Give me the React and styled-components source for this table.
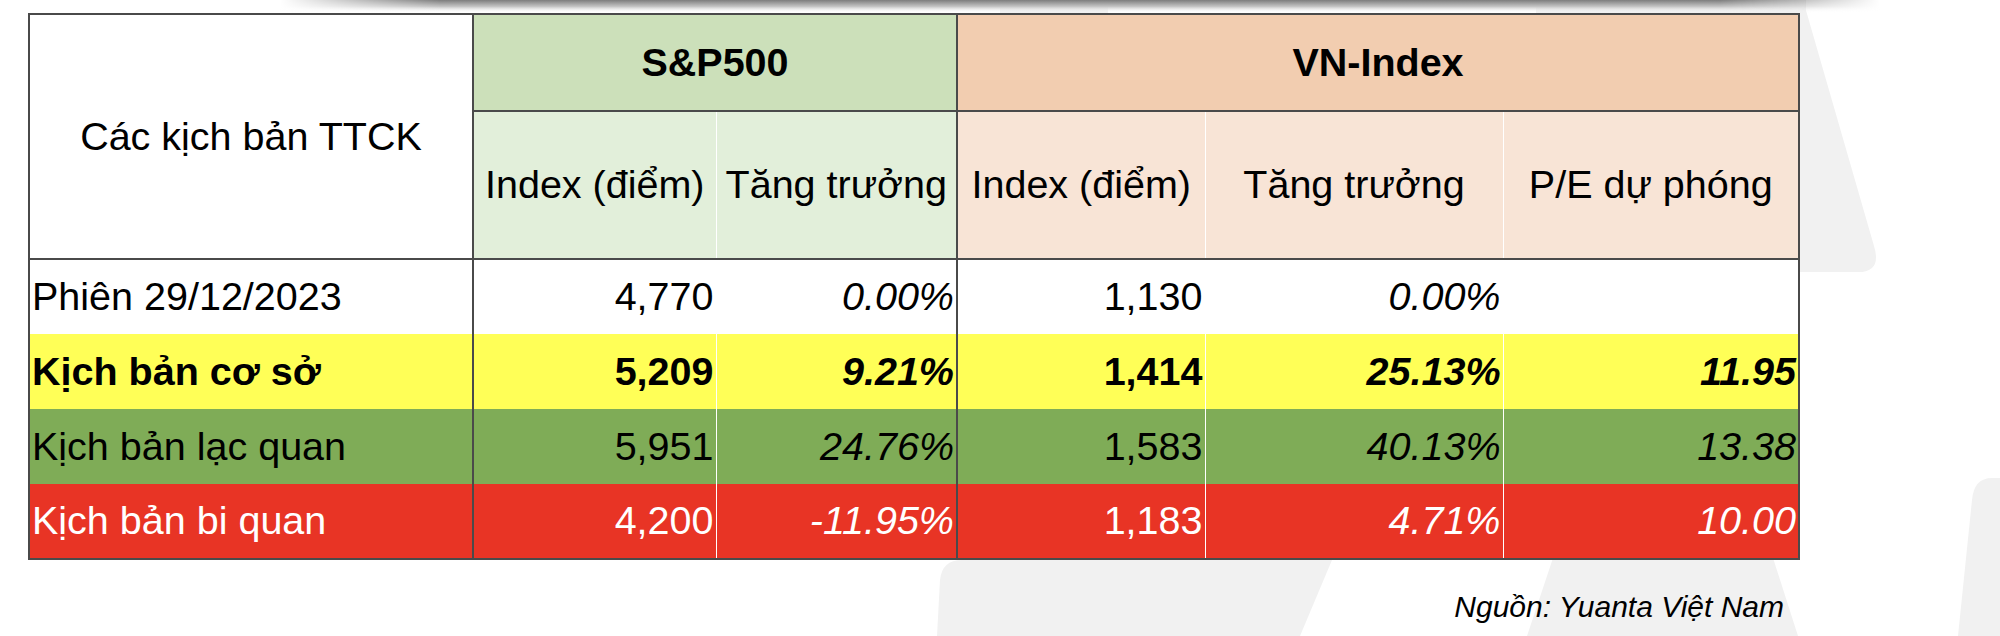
import styled, { createGlobalStyle } from "styled-components";

const GlobalStyle = createGlobalStyle`
  html, body {
    margin: 0;
    padding: 0;
    background: #ffffff;
  }
  body {
    font-family: "Liberation Sans", Arial, "DejaVu Sans", sans-serif;
    color: #000;
  }
`;

const columns = [444, 243, 241, 248, 298, 296];

const rows = [
  {
    label: "Phiên 29/12/2023",
    tone: "plain",
    values: ["4,770", "0.00%", "1,130", "0.00%", ""],
  },
  {
    label: "Kịch bản cơ sở",
    tone: "base",
    values: ["5,209", "9.21%", "1,414", "25.13%", "11.95"],
  },
  {
    label: "Kịch bản lạc quan",
    tone: "bull",
    values: ["5,951", "24.76%", "1,583", "40.13%", "13.38"],
  },
  {
    label: "Kịch bản bi quan",
    tone: "bear",
    values: ["4,200", "-11.95%", "1,183", "4.71%", "10.00"],
  },
];

// which value columns are italic (growth + P/E)
const italicCols = [false, true, false, true, true];

const tones = {
  plain: { bg: "#ffffff", fg: "#000000", weight: 400 },
  base: { bg: "#ffff57", fg: "#000000", weight: 700 },
  bull: { bg: "#7fac57", fg: "#000000", weight: 400 },
  bear: { bg: "#e83425", fg: "#ffffff", weight: 400 },
};

const App = () => {
  return (
    <>
      <GlobalStyle />
      <Canvas>
        <Watermark
          width="2000"
          height="636"
          viewBox="0 0 2000 636"
          aria-hidden="true"
        >
          <defs>
            <linearGradient id="topShade" x1="0" y1="0" x2="0" y2="1">
              <stop offset="0" stopColor="#7d7d7d" />
              <stop offset="0.5" stopColor="#c4c4c4" />
              <stop offset="1" stopColor="#ffffff" stopOpacity="0" />
            </linearGradient>
            <linearGradient id="topFade" x1="0" y1="0" x2="1" y2="0">
              <stop offset="0" stopColor="#fff" stopOpacity="0" />
              <stop offset="0.1" stopColor="#fff" stopOpacity="1" />
              <stop offset="0.9" stopColor="#fff" stopOpacity="1" />
              <stop offset="1" stopColor="#fff" stopOpacity="0" />
            </linearGradient>
            <mask id="topMask">
              <rect x="280" y="0" width="1600" height="14" fill="url(#topFade)" />
            </mask>
          </defs>
          {/* light grey logo strokes behind the table */}
          <rect x="1000" y="0" width="108" height="14" fill="#f1f1f1" />
          <rect x="1536" y="0" width="270" height="14" fill="#f1f1f1" />
          <path d="M1700,0 L1803,0 L1874,246 Q1882,272 1858,272 L1700,272 Z" fill="#f1f1f1" />
          <path d="M2000,478 L1992,478 Q1974,478 1972,500 L1958,636 L2000,636 Z" fill="#f1f1f1" />
          <polygon points="1527,636 1553,558 1773,558 1798,636" fill="#f1f1f1" />
          <path d="M937,636 L940,580 Q942,560 962,560 L1332,560 L1300,636 Z" fill="#f1f1f1" />
          <rect x="280" y="0" width="1600" height="13" fill="url(#topShade)" mask="url(#topMask)" />
        </Watermark>

        <Sheet>
          <Table>
            <colgroup>
              {columns.map((w, i) => (
                <col key={i} style={{ width: w }} />
              ))}
            </colgroup>
            <thead>
              <GroupRow>
                <Corner rowSpan={2}>Các kịch bản TTCK</Corner>
                <GroupCell colSpan={2} $bg="#cce0ba">
                  S&amp;P500
                </GroupCell>
                <GroupCell colSpan={3} $bg="#f2cdb0">
                  VN-Index
                </GroupCell>
              </GroupRow>
              <SubRow>
                <SubCell $bg="#e2efda">Index (điểm)</SubCell>
                <SubCell $bg="#e2efda" $split>
                  Tăng trưởng
                </SubCell>
                <SubCell $bg="#f8e4d6" $group>
                  Index (điểm)
                </SubCell>
                <SubCell $bg="#f8e4d6" $split>
                  Tăng trưởng
                </SubCell>
                <SubCell $bg="#f8e4d6" $split>
                  P/E dự phóng
                </SubCell>
              </SubRow>
            </thead>
            <tbody>
              {rows.map((row) => {
                const t = tones[row.tone];
                return (
                  <BodyRow key={row.label} $bg={t.bg} $fg={t.fg} $weight={t.weight}>
                    <LabelCell>{row.label}</LabelCell>
                    {row.values.map((v, i) => (
                      <ValueCell
                        key={i}
                        $italic={italicCols[i]}
                        $group={i === 2}
                        $split={i === 1 || i === 3 || i === 4}
                      >
                        {v}
                      </ValueCell>
                    ))}
                  </BodyRow>
                );
              })}
            </tbody>
          </Table>
          <Source>Nguồn: Yuanta Việt Nam</Source>
        </Sheet>
      </Canvas>
    </>
  );
};

/**
 * styles
 */
const Canvas = styled.div`
  position: relative;
  width: 2000px;
  height: 636px;
  overflow: hidden;
  background: #ffffff;
`;

const Watermark = styled.svg`
  position: absolute;
  inset: 0;
  display: block;
`;

const Sheet = styled.div`
  position: relative;
  display: flex;
  flex-direction: column;
  width: 1770px;
  padding: 13px 0 0 28px;
`;

const Table = styled.table`
  width: 1772px;
  table-layout: fixed;
  border-collapse: collapse;
  font-size: 39.5px;
  line-height: 1;
  border: 2px solid #4a4a4a;

  td,
  th {
    padding: 0;
    white-space: nowrap;
    overflow: hidden;
  }
`;

const GroupRow = styled.tr`
  height: 97px;
`;

const SubRow = styled.tr`
  height: 148px;
`;

const Corner = styled.th`
  background: #ffffff;
  font-weight: 400;
  text-align: center;
  vertical-align: middle;
  border-right: 2px solid #4a4a4a;
  border-bottom: 2px solid #4a4a4a;
`;

const GroupCell = styled.th`
  background: ${(p) => p.$bg};
  font-weight: 700;
  text-align: center;
  border-right: 2px solid #4a4a4a;
  border-bottom: 2px solid #4a4a4a;
`;

const SubCell = styled.th`
  background: ${(p) => p.$bg};
  font-weight: 400;
  text-align: center;
  border-bottom: 2px solid #4a4a4a;
  border-left: ${(p) =>
    p.$group
      ? "2px solid #4a4a4a"
      : p.$split
      ? "1px solid rgba(255,255,255,0.22)"
      : "none"};
`;

const BodyRow = styled.tr`
  height: 75px;
  background: ${(p) => p.$bg};
  color: ${(p) => p.$fg};
  font-weight: ${(p) => p.$weight};
`;

const LabelCell = styled.td`
  text-align: left;
  padding-left: 2px !important;
  border-right: 2px solid #4a4a4a;
`;

const ValueCell = styled.td`
  text-align: right;
  padding-right: 2px !important;
  font-style: ${(p) => (p.$italic ? "italic" : "normal")};
  border-left: ${(p) =>
    p.$group
      ? "2px solid #4a4a4a"
      : p.$split
      ? "1px solid rgba(255,255,255,0.18)"
      : "none"};
`;

const Source = styled.div`
  align-self: flex-end;
  margin-top: 30px;
  padding-right: 14px;
  font-size: 30px;
  line-height: 34px;
  font-style: italic;
`;

export default App;
